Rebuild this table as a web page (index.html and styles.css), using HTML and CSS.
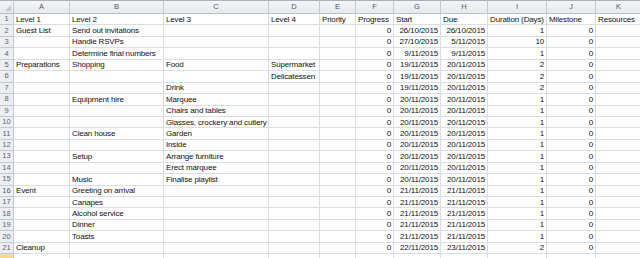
FILE: index.html
```html
<!DOCTYPE html>
<html>
<head>
<meta charset="utf-8">
<link rel="stylesheet" href="styles.css">
</head>
<body>
<table class="sheet">
<colgroup>
<col class="c-rh"><col class="c-a"><col class="c-b"><col class="c-c"><col class="c-d"><col class="c-e"><col class="c-f"><col class="c-g"><col class="c-h"><col class="c-i"><col class="c-j"><col class="c-k">
</colgroup>
<tr class="hdr"><th class="corner"><span class="tri"></span></th><th>A</th><th>B</th><th>C</th><th>D</th><th>E</th><th>F</th><th>G</th><th>H</th><th>I</th><th>J</th><th>K</th></tr>
<tr><th>1</th><td>Level 1</td><td>Level 2</td><td>Level 3</td><td>Level 4</td><td>Priority</td><td>Progress</td><td>Start</td><td>Due</td><td>Duration (Days)</td><td>Milestone</td><td>Resources</td></tr>
<tr><th>2</th><td>Guest List</td><td>Send out invitations</td><td></td><td></td><td></td><td class="n">0</td><td class="n">26/10/2015</td><td class="n">26/10/2015</td><td class="n">1</td><td class="n">0</td><td></td></tr>
<tr><th>3</th><td></td><td>Handle RSVPs</td><td></td><td></td><td></td><td class="n">0</td><td class="n">27/10/2015</td><td class="n">5/11/2015</td><td class="n">10</td><td class="n">0</td><td></td></tr>
<tr><th>4</th><td></td><td>Determine final numbers</td><td></td><td></td><td></td><td class="n">0</td><td class="n">9/11/2015</td><td class="n">9/11/2015</td><td class="n">1</td><td class="n">0</td><td></td></tr>
<tr><th>5</th><td>Preparations</td><td>Shopping</td><td>Food</td><td>Supermarket</td><td></td><td class="n">0</td><td class="n">19/11/2015</td><td class="n">20/11/2015</td><td class="n">2</td><td class="n">0</td><td></td></tr>
<tr><th>6</th><td></td><td></td><td></td><td>Delicatessen</td><td></td><td class="n">0</td><td class="n">19/11/2015</td><td class="n">20/11/2015</td><td class="n">2</td><td class="n">0</td><td></td></tr>
<tr><th>7</th><td></td><td></td><td>Drink</td><td></td><td></td><td class="n">0</td><td class="n">19/11/2015</td><td class="n">20/11/2015</td><td class="n">2</td><td class="n">0</td><td></td></tr>
<tr><th>8</th><td></td><td>Equipment hire</td><td>Marquee</td><td></td><td></td><td class="n">0</td><td class="n">20/11/2015</td><td class="n">20/11/2015</td><td class="n">1</td><td class="n">0</td><td></td></tr>
<tr><th>9</th><td></td><td></td><td>Chairs and tables</td><td></td><td></td><td class="n">0</td><td class="n">20/11/2015</td><td class="n">20/11/2015</td><td class="n">1</td><td class="n">0</td><td></td></tr>
<tr><th>10</th><td></td><td></td><td>Glasses, crockery and cutlery</td><td></td><td></td><td class="n">0</td><td class="n">20/11/2015</td><td class="n">20/11/2015</td><td class="n">1</td><td class="n">0</td><td></td></tr>
<tr><th>11</th><td></td><td>Clean house</td><td>Garden</td><td></td><td></td><td class="n">0</td><td class="n">20/11/2015</td><td class="n">20/11/2015</td><td class="n">1</td><td class="n">0</td><td></td></tr>
<tr><th>12</th><td></td><td></td><td>Inside</td><td></td><td></td><td class="n">0</td><td class="n">20/11/2015</td><td class="n">20/11/2015</td><td class="n">1</td><td class="n">0</td><td></td></tr>
<tr><th>13</th><td></td><td>Setup</td><td>Arrange furniture</td><td></td><td></td><td class="n">0</td><td class="n">20/11/2015</td><td class="n">20/11/2015</td><td class="n">1</td><td class="n">0</td><td></td></tr>
<tr><th>14</th><td></td><td></td><td>Erect marquee</td><td></td><td></td><td class="n">0</td><td class="n">20/11/2015</td><td class="n">20/11/2015</td><td class="n">1</td><td class="n">0</td><td></td></tr>
<tr><th>15</th><td></td><td>Music</td><td>Finalise playlist</td><td></td><td></td><td class="n">0</td><td class="n">20/11/2015</td><td class="n">20/11/2015</td><td class="n">1</td><td class="n">0</td><td></td></tr>
<tr><th>16</th><td>Event</td><td>Greeting on arrival</td><td></td><td></td><td></td><td class="n">0</td><td class="n">21/11/2015</td><td class="n">21/11/2015</td><td class="n">1</td><td class="n">0</td><td></td></tr>
<tr><th>17</th><td></td><td>Canapes</td><td></td><td></td><td></td><td class="n">0</td><td class="n">21/11/2015</td><td class="n">21/11/2015</td><td class="n">1</td><td class="n">0</td><td></td></tr>
<tr><th>18</th><td></td><td>Alcohol service</td><td></td><td></td><td></td><td class="n">0</td><td class="n">21/11/2015</td><td class="n">21/11/2015</td><td class="n">1</td><td class="n">0</td><td></td></tr>
<tr><th>19</th><td></td><td>Dinner</td><td></td><td></td><td></td><td class="n">0</td><td class="n">21/11/2015</td><td class="n">21/11/2015</td><td class="n">1</td><td class="n">0</td><td></td></tr>
<tr><th>20</th><td></td><td>Toasts</td><td></td><td></td><td></td><td class="n">0</td><td class="n">21/11/2015</td><td class="n">21/11/2015</td><td class="n">1</td><td class="n">0</td><td></td></tr>
<tr><th>21</th><td>Cleanup</td><td></td><td></td><td></td><td></td><td class="n">0</td><td class="n">22/11/2015</td><td class="n">23/11/2015</td><td class="n">2</td><td class="n">0</td><td></td></tr>
<tr class="sel"><th></th><td></td><td></td><td></td><td></td><td></td><td></td><td></td><td></td><td></td><td></td><td></td></tr>
</table>
</body>
</html>
```

FILE: styles.css
```css
html, body {
  margin: 0;
  padding: 0;
  background: #ffffff;
  overflow: hidden;
  width: 640px;
  height: 258px;
}

.sheet {
  table-layout: fixed;
  border-collapse: separate;
  border-spacing: 0;
  width: 642px;
  font-family: "Liberation Sans", Arial, sans-serif;
  font-size: 8px;
  letter-spacing: -0.15px;
  color: #111;
}

.c-rh { width: 14px; }
.c-a { width: 56px; }
.c-b { width: 94px; }
.c-c { width: 105px; }
.c-d { width: 51px; }
.c-e { width: 36px; }
.c-f { width: 38px; }
.c-g { width: 47px; }
.c-h { width: 47px; }
.c-i { width: 59px; }
.c-j { width: 49px; }
.c-k { width: 46px; }

.sheet tr { height: 11.45px; }
.sheet tr.hdr { height: 14px; }

.sheet td, .sheet th {
  box-sizing: border-box;
  white-space: nowrap;
  overflow: hidden;
  border-right: 1px solid #dadde2;
  border-bottom: 1px solid #dadde2;
  text-align: left;
}

.sheet td {
  padding: 1.6px 2px 0 2px;
  line-height: 8px;
  vertical-align: top;
}

.sheet th {
  background: #eceef1;
  color: #5a6678;
  font-weight: normal;
  text-align: center;
  vertical-align: middle;
  line-height: 10px;
  padding: 0;
  letter-spacing: 0;
  border-right: 1px solid #c3c9d2;
  border-bottom: 1px solid #c3c9d2;
  font-size: 7.5px;
}

.sheet tr.hdr th {
  background: linear-gradient(#f4f5f7, #e6e9ed);
  border-top: 1px solid #a9b0bb;
  border-bottom: 1px solid #b9c0ca;
  color: #4c5668;
}

.sheet td.n { text-align: right; }

.corner { position: relative; }
.tri {
  position: absolute;
  right: 2px;
  bottom: 2px;
  width: 0;
  height: 0;
  border-left: 6px solid transparent;
  border-bottom: 6px solid #c3c8cf;
}

.sheet tr.sel th {
  background: linear-gradient(#f8dc9a, #f3c96d);
  border-bottom-color: #e3b24f;
}
```
